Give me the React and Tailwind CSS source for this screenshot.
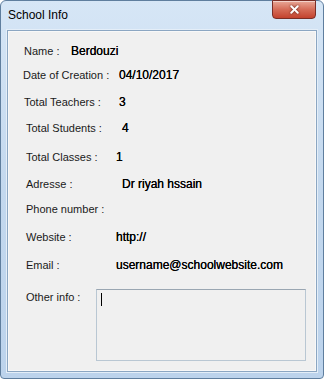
import { X } from 'lucide-react';

const rows = [
  { label: 'Name :', value: 'Berdouzi', row: 'mt-[9px]', lab: 'pl-[15px] w-[62px]' },
  { label: 'Date of Creation :', value: '04/10/2017', row: 'mt-[4px]', lab: 'pl-[14px] w-[110px]' },
  { label: 'Total Teachers :', value: '3', row: 'mt-[7px]', lab: 'pl-[15px] w-[110px]' },
  { label: 'Total Students :', value: '4', row: 'mt-[6px]', lab: 'pl-[17px] w-[113px]' },
  { label: 'Total Classes :', value: '1', row: 'mt-[9px]', lab: 'pl-[17px] w-[107px]' },
  { label: 'Adresse :', value: 'Dr riyah hssain', row: 'mt-[7px]', lab: 'pl-[17px] w-[113px]' },
  { label: 'Phone number :', value: '', row: 'mt-[5px]', lab: 'pl-[17px] w-[107px]' },
  { label: 'Website :', value: 'http://', row: 'mt-[8px]', lab: 'pl-[17px] w-[107px]' },
  { label: 'Email :', value: 'username@schoolwebsite.com', row: 'mt-[8px]', lab: 'pl-[17px] w-[107px]' },
];

const App = () => {
  return (
    <div className="w-[324px] h-[379px] bg-white font-['Liberation_Sans',Arial,sans-serif]">
      {/* Window frame */}
      <div className="w-[324px] h-[379px] rounded-t-[6px] rounded-b-[4px] border border-[#5f7e9e] bg-gradient-to-b from-[#d6e6f6] via-[#c3d8ee] to-[#bcd3ec] flex flex-col">
        <div className="h-[29px] flex items-start justify-between">
          <span className="pl-[7px] pt-[7px] text-[12px] text-black leading-[14px]">School Info</span>
          <div className="mr-[7px] w-[44px] h-[19px] -mt-px rounded-b-[4px] border border-[#7a2e26] bg-gradient-to-b from-[#e8a898] via-[#d56c58] to-[#c3422e] flex items-center justify-center shadow-[inset_0_1px_0_rgba(255,255,255,0.5)]">
            <X size={13} strokeWidth={3.5} className="text-white drop-shadow-[0_0_1px_#5a1a12]" />
          </div>
        </div>
        <div className="mx-[6px] mb-[6px] flex-1 border border-[#8ba6c2] shadow-[0_0_0_1px_#e4eef8]">
          <div className="h-full bg-[#f0f0f0] border border-[#f8f8f8]">
            <div className="flex flex-col">
              {rows.map((r) => (
                <div key={r.label} className={`h-[20px] flex items-center ${r.row}`}>
                  <span className={`${r.lab} shrink-0 text-[11px] text-[#1a1a1a] whitespace-nowrap`}>{r.label}</span>
                  <span className="text-[12px] text-black whitespace-nowrap [text-shadow:0_0_0.4px_#000]">{r.value}</span>
                </div>
              ))}
              <div className="mt-[14px] flex">
                <span className="pl-[17px] w-[87px] pt-0 text-[11px] text-[#1a1a1a] whitespace-nowrap">Other info :</span>
                <div className="w-[210px] h-[72px] border border-[#b9c7d3] border-t-[#9aa6b2] bg-[#f0f0f0] pl-[4px] pt-[3px]">
                  <div className="w-px h-[13px] bg-black"></div>
                </div>
              </div>
            </div>
          </div>
        </div>
      </div>
    </div>
  );
};

export default App;
